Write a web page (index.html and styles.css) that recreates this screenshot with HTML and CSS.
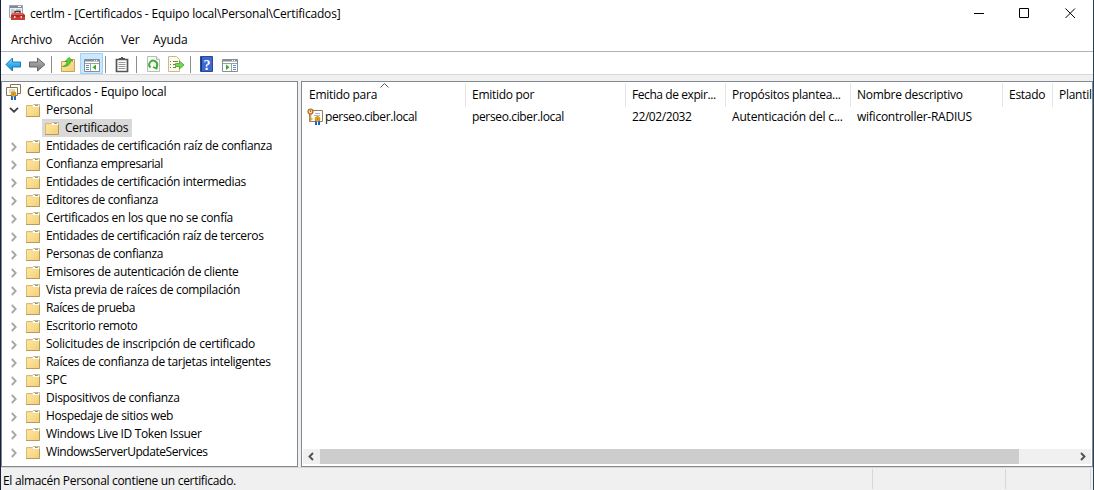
FILE: index.html
```html
<!DOCTYPE html>
<html lang="es">
<head>
<meta charset="utf-8">
<title>certlm</title>
<link rel="stylesheet" href="styles.css">
</head>
<body>
<svg class="defs" width="0" height="0">
  <defs>
    <linearGradient id="fold" x1="0" y1="0" x2="1" y2="1"><stop offset="0" stop-color="#ffe9a6"/><stop offset="1" stop-color="#f2cf78"/></linearGradient>
    <linearGradient id="blue" x1="0" y1="0" x2="0" y2="1"><stop offset="0" stop-color="#8bdcff"/><stop offset=".5" stop-color="#35b0ed"/><stop offset="1" stop-color="#168bd0"/></linearGradient>
    <linearGradient id="gray" x1="0" y1="0" x2="0" y2="1"><stop offset="0" stop-color="#b5b5b5"/><stop offset="1" stop-color="#7c7c7c"/></linearGradient>
    <symbol id="folder" viewBox="0 0 14 13">
      <path d="M.5 12.500V1.500H6.500L7.500.500H13.500V12.500Z" fill="url(#fold)" stroke="#dcba6b"/>
      <path d="M7 1H13V3H7Z" fill="#fff"/><path d="M9 1H12V2H9Z" fill="#5da4e8"/>
      <path d="M1 2.500H6L7 3.500H13" fill="none" stroke="#f6dc97"/><path d="M13.500 3V12.500H0" fill="none" stroke="#b89b57"/>
    </symbol>
    <symbol id="right" viewBox="0 0 6 10"><path d="M.8 1 4.700 5 .8 9" fill="none" stroke="#a6a6a6" stroke-width="1.800"/></symbol>
    <symbol id="ribbon" viewBox="0 0 7 9">
      <path d="M1 4H3V9H1ZM4 4H6V9H4Z" fill="#1c63d0"/>
      <circle cx="3.500" cy="3" r="2.500" fill="#e6a91d" stroke="#c28a14" stroke-width=".7"/><circle cx="3.500" cy="3" r=".8" fill="#a9700c"/>
    </symbol>
  </defs>
</svg>
<div class="window">
  <header class="titlebar">
    <svg class="app-icon" width="17" height="16" viewBox="0 0 17 16">
      <path d="M.5.5H13.500V12.500H.5Z" fill="#eef1f4" stroke="#98a3ae"/><path d="M1 1H13V3H1Z" fill="#7f8b99"/><path d="M9 1H12V2H9Z" fill="#fff"/>
      <path d="M2 5H5M2 7H5M7 5H12" stroke="#8fa4bb"/>
      <path d="M6 8V6.500H11V8" fill="none" stroke="#4d3431" stroke-width="1.300"/>
      <path d="M3 8H14L16 10V15H2V10Z" fill="#ce3b32"/><path d="M2 11H16" stroke="#8e1c1b"/><path d="M3 9H14" stroke="#ed7b70"/>
      <path d="M5 11H6.500V13H5ZM11.500 11H13V13H11.500Z" fill="#f5d6c9"/>
    </svg>
    <span class="caption">certlm - [Certificados - Equipo local\Personal\Certificados]</span>
    <svg class="controls" width="102" height="12" viewBox="0 0 102 12" fill="none" stroke="#000">
      <path d="M0 5.500H10M45.500.500H54.500V9.500H45.500ZM91.500 .500 101 10M101 .500 91.500 10"/>
    </svg>
  </header>
  <nav class="menu"><span class="m1">Archivo</span><span class="m2">Acción</span><span class="m3">Ver</span><span class="m4">Ayuda</span></nav>
  <div class="toolbar">
    <svg width="250" height="22" viewBox="0 0 250 22">
      <path d="M6 12.500 12.500 6V10H20.500V15H12.500V19Z" fill="url(#blue)" stroke="#187bb8"/>
      <path d="M45 12.500 37.500 6V10H29.500V15H37.500V19Z" fill="url(#gray)" stroke="#666"/>
      <path d="M51.500 4V21M105.500 4V21M136.500 4V21M190.500 4V21" stroke="#8c8c8c"/>
      <path d="M61.500 19.500V9.500H66.500L68 7.500H74.500V19.500Z" fill="url(#fold)" stroke="#c6a45a"/>
      <path d="M69 8.500H74" stroke="#fff6d4"/>
      <path d="M62.500 14.500C66 13.500 67 11.500 67 9.500H65L69 5.500 73 9H70.500C70.500 12.500 67 15 62.500 14.500Z" fill="#5dcc32" stroke="#369b1c" stroke-width=".7"/>
      <path d="M80.500 1.500H102.500V21.500H80.500Z" fill="#cce8ff" stroke="#99d1ff"/>
      <path d="M84.500 7.500H99.500V19.500H84.500Z" fill="#fff" stroke="#858d96"/><path d="M85 8H99V9.500H85Z" fill="#858d96"/><path d="M94 8.500H98" stroke="#fff" stroke-dasharray="1 1"/><path d="M85 11.500H99M90.500 12V19" stroke="#98a0a8"/><path d="M86 13.500H89M86 15.500H89M86 17.500H89" stroke="#5d8dbd"/>
      <path d="M96 12.500V18L92.500 15.300Z" fill="#2fae25"/>
      <path d="M116.500 7.500H127.500V19.500H116.500Z" fill="#fff" stroke="#555" stroke-width="1.700"/><path d="M119 8V6H121V5H123V6H125V8Z" fill="#555"/><path d="M118.500 10.500H125.500M118.500 12.500H125.500M118.500 14.500H125.500M118.500 16.500H125.500" stroke="#999"/>
      <path d="M147.500 4.500H156.500L159.500 7.500V19.500H147.500Z" fill="#fafafa" stroke="#bbb"/><path d="M156.500 4.500V7.500H159.500" fill="#eee" stroke="#bbb"/>
      <path d="M150.500 15.500A3.900 3.900 0 1 1 156.600 14.500M157.500 12.500 156.500 16.500 153 15" fill="none" stroke="#3bad31" stroke-width="1.900"/>
      <path d="M168.500 4.500H176.500L179.500 7.500V19.500H168.500Z" fill="#fffbe8" stroke="#c8b98f"/><path d="M170 9.500H171M170 12.500H171M170 15.500H171M173 9.500H178M173 12.500H176M173 15.500H176" stroke="#777"/>
      <path d="M175.500 11.500H179.500V9L184 13 179.500 17V14.500H175.500Z" fill="#77d454" stroke="#47a62d" stroke-width=".8"/>
      <path d="M200.500 4.500H212.500V19.500H200.500Z" fill="#3f68cf" stroke="#294a9c"/><path d="M201.500 5V19" stroke="#183783"/><text class="question" x="203.500" y="17.500">?</text>
      <path d="M222.500 7.500H237.500V19.500H222.500Z" fill="#fff" stroke="#858d96"/><path d="M223 8H237V9.500H223Z" fill="#858d96"/><path d="M232 8.500H236" stroke="#fff" stroke-dasharray="1 1"/><path d="M223 11.500H237M231.500 12V19" stroke="#98a0a8"/><path d="M233 13.500H236M233 15.500H236M233 17.500H236" stroke="#5d8dbd"/><path d="M226 12.500V18L229.500 15.300Z" fill="#2fae25"/>
    </svg>
  </div>
  <main class="panes">
    <section class="tree" id="tree">
      <div class="row root"><svg width="16" height="16" viewBox="0 0 16 16"><path d="M4.500.500H14.500V9.500H4.500Z" fill="#fffef7" stroke="#84745c"/><path d="M.500 3.500H11.500V11.500H.500Z" fill="#fffef4" stroke="#84745c"/><path d="M3 6H9M3 8H6" stroke="#c4b48f"/><use href="#ribbon" x="4" y="7" width="7" height="9"/></svg><span>Certificados - Equipo local</span></div>
      <div class="row"><svg class="arrow open" width="10" height="6" viewBox="0 0 10 6"><path d="M1 .8 5 4.700 9 .8" fill="none" stroke="#404040" stroke-width="1.800"/></svg><svg class="folder" width="14" height="13"><use href="#folder" width="14" height="13"/></svg><span>Personal</span></div>
      <div class="row child"><svg class="folder" width="14" height="13"><use href="#folder" width="14" height="13"/></svg><span>Certificados</span></div>
    </section>
    <section class="list">
      <div class="grid head"><div>Emitido para<svg class="sort" width="9" height="5" viewBox="0 0 9 5"><path d="M.5 4.500 4.500.500 8.500 4.500" fill="none" stroke="#555"/></svg></div><div>Emitido por</div><div class="date">Fecha de expir...</div><div>Propósitos plantea...</div><div>Nombre descriptivo</div><div>Estado</div><div>Plantil</div></div>
      <div class="grid item"><div class="name"><svg width="17" height="17" viewBox="0 0 17 17"><path d="M2.500 2.500H15.500V13.500H2.500Z" fill="#fffef7" stroke="#8f8062"/><path d="M8 5.500H13M7 7.500H13" stroke="#aab1d4"/><path d="M3.500 5V13.500M3.500 11H5.500" stroke="#d79a4d" stroke-width="1.500"/><circle cx="3.500" cy="3.500" r="2.500" fill="#ffd98a" stroke="#a8641d" stroke-width="1.200"/><circle cx="3.500" cy="3" r=".7" fill="#6b3a08"/><use href="#ribbon" x="7" y="8" width="7" height="9"/></svg><span>perseo.ciber.local</span></div><div class="issuer">perseo.ciber.local</div><div class="date">22/02/2032</div><div class="purpose">Autenticación del c...</div><div>wificontroller-RADIUS</div></div>
      <div class="scroll"><svg width="17" height="15"><path d="M10 4 6.500 7.500 10 11" fill="none" stroke="#505050" stroke-width="1.900"/></svg><div class="thumb"></div><svg class="end" width="17" height="15"><path d="M7 4 10.500 7.500 7 11" fill="none" stroke="#505050" stroke-width="1.900"/></svg></div>
    </section>
  </main>
  <footer class="status"><span>El almacén Personal contiene un certificado.</span><i class="s2"></i><i class="s3"></i><i class="s4"></i></footer>
</div>
<script src="tree.js"></script>
</body>
</html>
```
FILE: styles.css
```css
* { box-sizing: border-box; }
body { margin: 0; overflow: hidden; background: #fff; color: #000; font: 12px "Open Sans", "Noto Sans", sans-serif; letter-spacing: -.25px; white-space: nowrap; }
svg { display: block; flex: none; }
.defs { position: absolute; }
.window { width: 1094px; height: 490px; display: flex; flex-direction: column; border-left: 1px solid #18203b; border-right: 1px solid #244458; background: #f0f0f0; }
.window > * { flex: none; }
.titlebar { height: 28px; display: flex; background: #fff; padding: 5px 17px 0 8px; }
.caption { margin-left: 4px; line-height: 18px; flex: 1; letter-spacing: -.19px; }
.controls { margin-top: 3px; }
.menu { height: 23px; display: flex; background: #fff; padding-left: 10px; line-height: 24px; letter-spacing: -.1px; }
.m1 { width: 57px; } .m2 { width: 53px; } .m3 { width: 32px; }
.toolbar { height: 24px; background: #fff; border-top: 1px solid #b1b3b8; border-bottom: 1px solid #d9d9d9; }
.toolbar svg { margin: 0 0 0 -1px; }
.question { font: bold 14px "Liberation Serif", serif; fill: #fff; letter-spacing: 0; }
.panes { height: 386px; margin-top: 6px; display: flex; gap: 3px; }
.tree, .list { border: 1px solid #828790; background: #fff; overflow: hidden; }
.tree { width: 297px; padding-top: 1px; }
.row { height: 18px; line-height: 18px; display: flex; align-items: center; padding-left: 7px; }
.row .folder { margin-left: 7px; }
.row span { margin-left: 6px; }
.arrow { margin: 2px 2px 0 2px; }
.arrow.open { margin: 0; }
.row .arrow.open + .folder { margin-left: 7px; }
.root { padding-left: 4px; }
.root span { margin-left: 5px; letter-spacing: -.18px; }
.child { width: 90px; margin-left: 40px; padding-left: 3px; background: #d9d9d9; }
.row.child .folder { margin-left: 0; }
.list { width: 792px; display: flex; flex-direction: column; padding: 1px; }
.grid { display: grid; grid-template-columns: 163px 160px 100px 125px 152px 50px 80px; }
.grid > div { padding-left: 6px; position: relative; }
.head { height: 24px; line-height: 24px; }
.head > div { border-right: 1px solid #e5e5e5; letter-spacing: -.28px; }
.sort { position: absolute; left: 77px; top: 0; }
.item { height: 18px; line-height: 18px; margin-top: 1px; }
.grid > .name { display: flex; padding-left: 4px; letter-spacing: -.36px; }
.name span { margin-left: 1px; }
.grid > .issuer { letter-spacing: -.36px; }
.grid > .date { letter-spacing: -.42px; }
.grid > .purpose { letter-spacing: -.19px; }
.scroll { height: 15px; margin: auto 0 1px; display: flex; background: #f0f0f0; }
.thumb { width: 699px; background: #cdcdcd; }
.end { margin-left: auto; }
.status { height: 23px; border-top: 1px solid #d7d7d7; padding: 1px 2px 0; display: flex; line-height: 23px; letter-spacing: -.31px; }
.status span { width: 869px; }
.status i { height: 20px; border-left: 1px solid #d7d7d7; }
.s2 { width: 133px; } .s3 { width: 85px; }
```
FILE: tree.js
```js
const stores = [
  ["Entidades de certificación raíz de confianza", 226], ["Confianza empresarial", 117],
  ["Entidades de certificación intermedias", 200], ["Editores de confianza", 112],
  ["Certificados en los que no se confía", 187], ["Entidades de certificación raíz de terceros", 217.5],
  ["Personas de confianza", 117], ["Emisores de autenticación de cliente", 192.5],
  ["Vista previa de raíces de compilación", 194], ["Raíces de prueba", 89], ["Escritorio remoto", 91.5],
  ["Solicitudes de inscripción de certificado", 209], ["Raíces de confianza de tarjetas inteligentes", 224.5],
  ["SPC", 21], ["Dispositivos de confianza", 133.5], ["Hospedaje de sitios web", 127],
  ["Windows Live ID Token Issuer", 155.5], ["WindowsServerUpdateServices", 161.5]
];
const tree = document.getElementById("tree");
for (const [name, width] of stores) {
  tree.insertAdjacentHTML("beforeend",
    `<div class="row"><svg class="arrow" width="6" height="10"><use href="#right" width="6" height="10"/></svg><svg class="folder" width="14" height="13"><use href="#folder" width="14" height="13"/></svg><span>${name}</span></div>`);
  const label = tree.lastElementChild.querySelector("span");
  label.style.letterSpacing = "0px";
  label.style.letterSpacing = (width - label.getBoundingClientRect().width) / name.length + "px";
}
```
